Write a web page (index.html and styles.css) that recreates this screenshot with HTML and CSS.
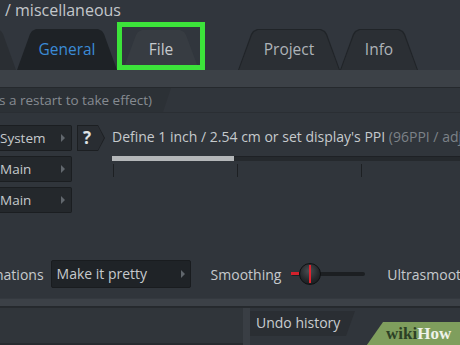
FILE: index.html
```html
<!DOCTYPE html>
<html>
<head>
<meta charset="utf-8">
<link rel="stylesheet" href="styles.css">
</head>
<body>
<div class="screen">
  <div class="title">/ miscellaneous</div>

  <div class="tabbar">
    <div class="tab tab-edge"></div>
    <div class="tab tab-active"><span>General</span></div>
    <div class="tab tab-file"><span>File</span></div>
    <div class="tab tab-dim tab-project"><span>Project</span></div>
    <div class="tab tab-dim tab-info"><span>Info</span></div>
    <div class="highlight"></div>
  </div>

  <div class="band"></div>

  <div class="section">
    <div class="section-label">s a restart to take effect)</div>
  </div>

  <div class="settings">
    <div class="buttons">
      <div class="drop">System<i class="caret"></i></div>
      <div class="drop">Main<i class="caret"></i></div>
      <div class="drop">Main<i class="caret"></i></div>
    </div>
    <div class="help">?</div>
    <div class="ppi">
      <div class="desc">Define 1 inch / 2.54 cm or set display's PPI <span class="muted">(96PPI / adjust)</span></div>
      <div class="ppi-slider">
        <div class="ppi-fill"></div>
        <div class="ppi-track"></div>
      </div>
      <div class="ticks">
        <i class="tick"></i><i class="tick"></i><i class="tick"></i>
      </div>
    </div>
  </div>

  <div class="anim-row">
    <span class="label cut">nations</span>
    <div class="drop wide">Make it pretty<i class="caret"></i></div>
    <span class="label smooth">Smoothing</span>
    <div class="knob-slider">
      <div class="knob-track"></div>
      <div class="red-mark"></div>
      <div class="knob"></div>
    </div>
    <span class="label ultra">Ultrasmooth</span>
  </div>

  <div class="band thin"></div>

  <div class="lower">
    <div class="panel-left"></div>
    <div class="divider"></div>
    <div class="panel-right">
      <div class="panel-label">Undo history</div>
    </div>
  </div>

  <div class="wikihow"><span class="wiki">wiki</span><span class="how">How</span></div>
</div>
</body>
</html>
```

FILE: styles.css
```css
* { box-sizing: border-box; }
html, body { margin: 0; padding: 0; }
body {
  width: 460px;
  height: 345px;
  overflow: hidden;
  background: #30353b;
  font-family: "Open Sans", "Noto Sans", sans-serif;
  color: #c4c8cc;
}
.screen {
  position: relative;
  width: 460px;
  height: 345px;
  overflow: hidden;
  display: flex;
  flex-direction: column;
  background: #30353b;
}
.screen > * { flex-shrink: 0; }

/* title */
.title {
  height: 24px;
  padding-left: 5px;
  font-size: 16px;
  line-height: 21px;
  color: #c3c7cb;
  background: #31363d;
  white-space: nowrap;
}

/* tabs */
.tabbar {
  position: relative;
  height: 46px;
  display: flex;
  align-items: flex-end;
  background: #31363d;
}
.tabbar > * { flex-shrink: 0; }
.tab {
  position: relative;
  height: 41px;
  display: flex;
  align-items: center;
  justify-content: center;
  font-size: 15.5px;
  clip-path: polygon(0 100%, 13px 5px, 15px 2px, 19px 0, calc(100% - 19px) 0, calc(100% - 15px) 2px, calc(100% - 13px) 5px, 100% 100%);
}
.tab span { position: relative; top: -1px; }
.tab-edge {
  width: 60px;
  margin-left: -44px;
  background: #2a2e33;
}
.tab-active {
  width: 100px;
  margin-left: 1px;
  background: #1e2226;
  color: #3b8bd6;
}
.tab-file {
  width: 76px;
  margin-left: 6px;
  height: 40px;
  background: #373c42;
  color: #c6cacd;
}
.tab-dim {
  background: #202428;
  color: #aeb3b8;
}
.tab-dim::before {
  content: "";
  position: absolute;
  inset: 1px 1px 0 1px;
  background: #2b2f34;
  clip-path: polygon(0 100%, 13px 5px, 15px 2px, 19px 0, calc(100% - 19px) 0, calc(100% - 15px) 2px, calc(100% - 13px) 5px, 100% 100%);
}
.tab-project { width: 102px; margin-left: 39px; }
.tab-info { width: 78px; }

.highlight {
  position: absolute;
  left: 117px;
  top: -2px;
  width: 88px;
  height: 48px;
  border: 5px solid #3ce33a;
}

/* bands */
.band {
  height: 18px;
  background: #3c4147;
  border-bottom: 1px solid #25292d;
}
.band.thin {
  height: 9px;
  margin-top: 10px;
  border-top: 1px solid #34393f;
}

/* section label */
.section {
  height: 25px;
  border-bottom: 1px solid #2a2e33;
}
.section-label {
  width: 172px;
  height: 24px;
  margin-left: -1px;
  font-size: 13.5px;
  line-height: 24px;
  color: #868b91;
  background: #2c3136;
  clip-path: polygon(0 0, 100% 0, calc(100% - 8px) 100%, 0 100%);
  white-space: nowrap;
}

/* settings rows */
.settings {
  display: flex;
  align-items: flex-start;
  padding-top: 12px;
  height: 147px;
}
.settings > * { flex-shrink: 0; }
.buttons {
  display: flex;
  flex-direction: column;
  gap: 5px;
}
.drop {
  position: relative;
  flex-shrink: 0;
  width: 72px;
  height: 26px;
  font-size: 13.5px;
  line-height: 24px;
  color: #c6cacd;
  background: #24282c;
  border: 1px solid #1b1e21;
  border-left: none;
  border-radius: 0 2px 2px 0;
  white-space: nowrap;
}
.caret {
  position: absolute;
  right: 6px;
  top: 8px;
  width: 0;
  height: 0;
  border-top: 4px solid transparent;
  border-bottom: 4px solid transparent;
  border-left: 4px solid #61676d;
}
.help {
  position: relative;
  isolation: isolate;
  margin-left: 5px;
  width: 28px;
  height: 26px;
  background: #1c1f22;
  clip-path: polygon(0 0, 21px 0, 100% 50%, 21px 100%, 0 100%);
  font-size: 17px;
  font-weight: 700;
  line-height: 26px;
  color: #dfe2e5;
  text-indent: 6px;
}
.help::before {
  content: "";
  position: absolute;
  inset: 1px;
  background: #292d32;
  clip-path: polygon(0 0, 20px 0, 100% 50%, 20px 100%, 0 100%);
  z-index: -1;
}
.ppi {
  margin-left: 7px;
  flex: 1 1 auto;
  min-width: 0;
}
.desc {
  height: 26px;
  font-size: 14px;
  line-height: 24px;
  color: #c6cacd;
  white-space: nowrap;
}
.muted { color: #7c8288; }
.ppi-slider {
  display: flex;
  margin-top: 5px;
  height: 5px;
}
.ppi-fill {
  width: 122px;
  background: #b4b7b9;
}
.ppi-track {
  flex: 1;
  background: #25292d;
  border-top: 1px solid #1e2125;
}
.ticks {
  display: flex;
  gap: 123px;
  margin-top: 3px;
  padding-left: 1px;
}
.tick {
  width: 1px;
  height: 13px;
  background: #1d2023;
}

/* animation row */
.anim-row {
  display: flex;
  align-items: center;
  height: 28px;
  white-space: nowrap;
}
.anim-row > * { flex-shrink: 0; }
.label {
  font-size: 14px;
  color: #c6cacd;
}
.cut { margin-left: -5px; }
.drop.wide {
  width: 140px;
  height: 28px;
  margin-left: 7px;
  padding-left: 5px;
  font-size: 14px;
  line-height: 26px;
  background: #1f2327;
  border: 1px solid #191c1f;
  border-radius: 2px;
}
.drop.wide .caret { top: 9px; right: 5px; }
.smooth { margin-left: 20px; }
.knob-slider {
  position: relative;
  width: 76px;
  height: 28px;
  margin-left: 8px;
}
.knob-track {
  position: absolute;
  left: 2px;
  right: 0;
  top: 12px;
  height: 4px;
  background: #1c1f22;
  border-radius: 2px;
}
.red-mark {
  position: absolute;
  left: 2px;
  top: 12px;
  width: 8px;
  height: 3px;
  background: #d3212c;
}
.knob {
  position: absolute;
  left: 10px;
  top: 3px;
  width: 22px;
  height: 22px;
  border-radius: 50%;
  background: radial-gradient(circle at 45% 35%, #4a4e52 0%, #25282b 55%, #141618 100%);
  border: 1px solid #0f1113;
}
.knob::after {
  content: "";
  position: absolute;
  left: 9px;
  top: 1px;
  width: 2px;
  height: 18px;
  background: #e0232f;
}
.ultra { margin-left: 22px; }

/* lower panels */
.lower {
  flex: 1 1 auto;
  display: flex;
  border-top: 1px solid #262a2e;
}
.panel-left {
  width: 243px;
  background: #30353a;
  border-bottom: 2px solid #272b2f;
}
.divider {
  width: 7px;
  background: #393e44;
}
.panel-right {
  flex: 1;
  padding-top: 3px;
  background: #30353b;
}
.panel-label {
  width: 105px;
  height: 25px;
  padding-left: 6px;
  font-size: 14px;
  line-height: 24px;
  color: #c8ccd0;
  background: #2a2e33;
  clip-path: polygon(0 0, 100% 0, calc(100% - 9px) 100%, 0 100%);
  white-space: nowrap;
}

/* wikiHow badge */
.wikihow {
  position: absolute;
  left: 362px;
  top: 322px;
  width: 110px;
  height: 30px;
  padding-left: 24px;
  background: #7f9e5d;
  clip-path: polygon(21px 0, 100% 0, 100% 100%, 0 100%);
  font-family: "Liberation Serif", "DejaVu Serif", serif;
  font-weight: 700;
  font-size: 17px;
  line-height: 24px;
  white-space: nowrap;
}
.wiki { color: #2c4125; }
.how { color: #eef2ea; }
```
